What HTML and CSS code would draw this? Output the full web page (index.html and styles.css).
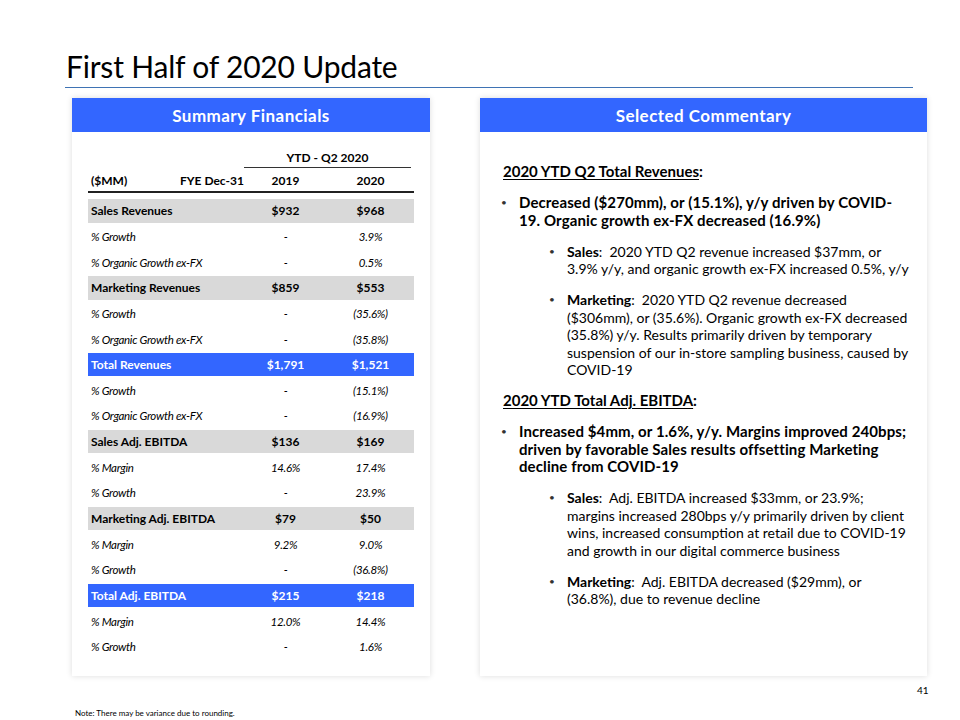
FILE: index.html
```html
<!DOCTYPE html>
<html lang="en">
<head>
<meta charset="utf-8">
<title>First Half of 2020 Update</title>
<link rel="stylesheet" href="styles.css">
</head>
<body>
<div class="slide">
  <header class="title-bar">
    <h1>First Half of 2020 Update</h1>
  </header>

  <main class="panels">
    <section class="card card-left">
      <div class="card-head">Summary Financials</div>
      <div class="fin">
        <div class="row ytd"><span></span><span class="ytd-label">YTD - Q2 2020</span></div>
        <div class="row head"><span class="lab"><span>($MM)</span><span>FYE Dec-31</span></span><span>2019</span><span>2020</span></div>
        <div class="rows">
          <div class="row band"><span class="lab">Sales Revenues</span><span>$932</span><span>$968</span></div>
          <div class="row sub"><span class="lab">% Growth</span><span>-</span><span>3.9%</span></div>
          <div class="row sub"><span class="lab">% Organic Growth ex-FX</span><span>-</span><span>0.5%</span></div>
          <div class="row band"><span class="lab">Marketing Revenues</span><span>$859</span><span>$553</span></div>
          <div class="row sub"><span class="lab">% Growth</span><span>-</span><span>(35.6%)</span></div>
          <div class="row sub"><span class="lab">% Organic Growth ex-FX</span><span>-</span><span>(35.8%)</span></div>
          <div class="row total"><span class="lab">Total Revenues</span><span>$1,791</span><span>$1,521</span></div>
          <div class="row sub"><span class="lab">% Growth</span><span>-</span><span>(15.1%)</span></div>
          <div class="row sub"><span class="lab">% Organic Growth ex-FX</span><span>-</span><span>(16.9%)</span></div>
          <div class="row band"><span class="lab">Sales Adj. EBITDA</span><span>$136</span><span>$169</span></div>
          <div class="row sub"><span class="lab">% Margin</span><span>14.6%</span><span>17.4%</span></div>
          <div class="row sub"><span class="lab">% Growth</span><span>-</span><span>23.9%</span></div>
          <div class="row band"><span class="lab">Marketing Adj. EBITDA</span><span>$79</span><span>$50</span></div>
          <div class="row sub"><span class="lab">% Margin</span><span>9.2%</span><span>9.0%</span></div>
          <div class="row sub"><span class="lab">% Growth</span><span>-</span><span>(36.8%)</span></div>
          <div class="row total"><span class="lab">Total Adj. EBITDA</span><span>$215</span><span>$218</span></div>
          <div class="row sub"><span class="lab">% Margin</span><span>12.0%</span><span>14.4%</span></div>
          <div class="row sub"><span class="lab">% Growth</span><span>-</span><span>1.6%</span></div>
        </div>
      </div>
    </section>

    <section class="card card-right">
      <div class="card-head">Selected Commentary</div>
      <div class="commentary">
        <p class="sec-head"><span class="ul">2020 YTD Q2 Total Revenues</span>:</p>
        <ul class="l1">
          <li>Decreased ($270mm), or (15.1%), y/y driven by COVID-<br>19. Organic growth ex-FX decreased (16.9%)</li>
        </ul>
        <ul class="l2">
          <li><b>Sales</b>:&nbsp; 2020 YTD Q2 revenue increased $37mm, or 3.9% y/y, and organic growth ex-FX increased 0.5%, y/y</li>
          <li><b>Marketing</b>:&nbsp; 2020 YTD Q2 revenue decreased ($306mm), or (35.6%). Organic growth ex-FX decreased (35.8%) y/y. Results primarily driven by temporary suspension of our in-store sampling business, caused by COVID-19</li>
        </ul>
        <p class="sec-head"><span class="ul">2020 YTD Total Adj. EBITDA</span>:</p>
        <ul class="l1">
          <li>Increased $4mm, or 1.6%, y/y. Margins improved 240bps; driven by favorable Sales results offsetting Marketing decline from COVID-19</li>
        </ul>
        <ul class="l2">
          <li><b>Sales</b>:&nbsp; Adj. EBITDA increased $33mm, or 23.9%; margins increased 280bps y/y primarily driven by client wins, increased consumption at retail due to COVID-19 and growth in our digital commerce business</li>
          <li><b>Marketing</b>:&nbsp; Adj. EBITDA decreased ($29mm), or (36.8%), due to revenue decline</li>
        </ul>
      </div>
    </section>
  </main>

  <footer class="foot">
    <div class="page-num">41</div>
    <div class="note">Note: There may be variance due to rounding.</div>
  </footer>
</div>
</body>
</html>
```

FILE: styles.css
```css
* { box-sizing: border-box; }
html, body { margin: 0; padding: 0; background: #ffffff; }
body { font-family: "Lato", "Liberation Sans", sans-serif; color: #000; }

.slide { width: 960px; height: 720px; overflow: hidden; }

.title-bar {
  margin-left: 65px;
  width: 848px;
  height: 88px;
  border-bottom: 1.5px solid #3f73b4;
  display: flex;
  align-items: flex-end;
}
.title-bar h1 {
  margin: 0 0 3px 1px;
  font-weight: 400;
  font-size: 30px;
  line-height: 36px;
  letter-spacing: -0.2px;
}

.panels {
  display: flex;
  gap: 50px;
  padding-left: 72px;
  margin-top: 10px;
}
.card {
  height: 578px;
  background: #fff;
  box-shadow: 0 0 6px rgba(0, 0, 0, 0.14);
}
.card-left { width: 358px; }
.card-right { width: 447px; }

.card-head {
  height: 34px;
  background: #3366ff;
  color: #fff;
  font-weight: 700;
  font-size: 17px;
  line-height: 35px;
  text-align: center;
  letter-spacing: 0.45px;
}

/* Financial table */
.fin { padding: 19px 0 0 16px; width: 342px; }
.row {
  display: grid;
  grid-template-columns: 156px 83px 87px;
  align-items: center;
  font-size: 12px;
}
.row > span:not(.lab) { text-align: center; }
.ytd { height: 17px; }
.ytd .ytd-label {
  grid-column: 2 / 4;
  font-weight: 700;
  font-size: 12px;
  line-height: 14px;
  padding-bottom: 2px;
  border-bottom: 1px solid #333;
  margin-right: 3px;
}
.head {
  height: 25px;
  padding-top: 2px;
  font-weight: 700;
  border-bottom: 2px solid #222;
}
.head .lab { display: flex; justify-content: space-between; padding-left: 3px; }
.rows { margin-top: 5px; }
.rows .row { height: 25.65px; }
.lab { padding-left: 3px; white-space: nowrap; }
.band { background: #d9d9d9; font-weight: 700; border-top: 1px solid #fff; border-bottom: 1px solid #fff; }
.total { background: #3366ff; color: #fff; font-weight: 700; border-top: 1px solid #fff; border-bottom: 1px solid #fff; }
.sub { font-style: italic; font-size: 11.5px; letter-spacing: -0.3px; }

/* Commentary */
.commentary { padding: 31px 11px 0 23px; font-size: 14px; line-height: 17.5px; }
.sec-head { margin: 0 0 13.5px; font-weight: 700; font-size: 15px; }
.sec-head .ul { text-decoration: underline; text-underline-offset: 2px; }
.commentary ul { list-style: none; margin: 0; padding: 0; }
.commentary li { position: relative; margin-bottom: 13.5px; }
.commentary li::before {
  content: "\2022";
  position: absolute;
  top: 0;
  font-size: 10px;
  color: #333;
  font-weight: 400;
  letter-spacing: 0;
}
.l1 li { padding-left: 16px; font-weight: 700; font-size: 15px; letter-spacing: 0.1px; }
.l1 li::before { left: -2px; }
.l2 li { padding-left: 64px; padding-right: 4px; }
.l2 li::before { left: 46px; }
.l2 li b { font-weight: 700; }

/* Footer */
.foot { position: relative; }
.page-num {
  margin: 8px 0 0 917px;
  font-size: 10px;
  line-height: 12px;
}
.note {
  margin: 11px 0 0 75px;
  font-size: 8px;
  line-height: 12px;
}
```
